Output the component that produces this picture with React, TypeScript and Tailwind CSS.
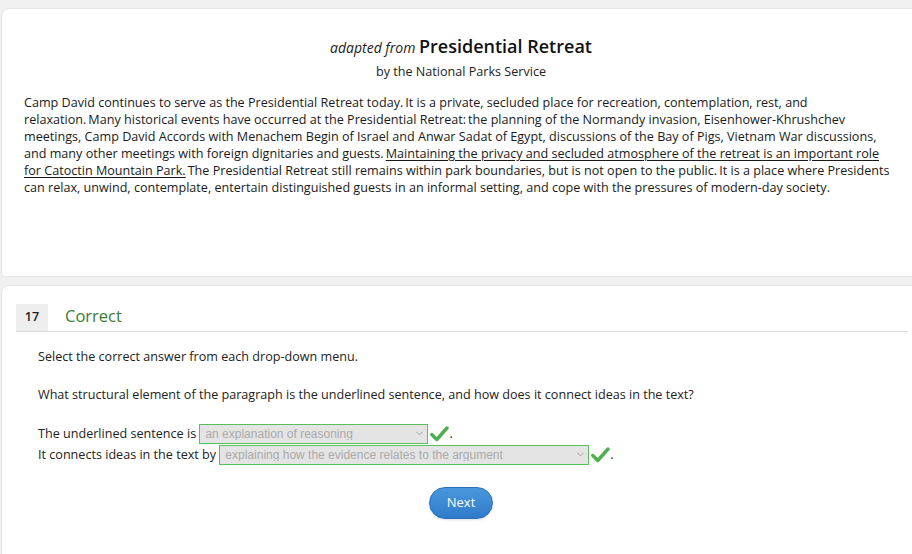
import { ChevronDown } from "lucide-react";

const font = { fontFamily: '"Open Sans", "Noto Sans", sans-serif' };

function Check() {
    return (
        <svg width="19" height="16" viewBox="0 0 19 16" className="inline-block ml-0.5">
            <path d="M1.8 8.5 L6.8 13.5 L17 2" fill="none" stroke="#4caf50" strokeWidth="3.4" strokeLinecap="round" strokeLinejoin="round" />
        </svg>
    );
}

function Dropdown({ value, width }: { value: string; width: string }) {
    return (
        <span
            className={`inline-flex items-center justify-between h-[20px] ${width} border border-[#58c058] bg-[#e4e4e4] pl-[5px] pr-[2px] align-middle`}
        >
            <span className="text-[12px] text-[#aaaaaa] font-['Liberation_Sans',Arial,sans-serif] leading-none truncate">
                {value}
            </span>
            <ChevronDown size={11} className="text-[#9a9a9a]" strokeWidth={2} />
        </span>
    );
}

export default function App() {
    return (
        <div className="w-[912px] h-[554px] overflow-hidden bg-[#f0f0f0] text-[#222]" style={font}>
            <div className="pt-[8px] pl-[1px] flex flex-col gap-[8px]">
                <div className="h-[269px] bg-white rounded-tl-[8px] rounded-bl-[4px] border border-[#e6e6e6] border-r-0 px-[22px] pt-[25px]">
                    <div className="pl-[8px]">
                        <div className="text-center leading-[24px]">
                            <span className="italic text-[14px]">adapted from </span>
                            <span className="text-[18px] font-semibold text-[#111]">Presidential Retreat</span>
                        </div>
                        <div className="text-center text-[12.6px] mt-[3px]">by the National Parks Service</div>
                    </div>
                    <p className="mt-[12px] text-[12.6px] leading-[17px] text-[#1a1a1a] whitespace-nowrap">
                        Camp David continues to serve as the Presidential Retreat today.&thinsp;It is a private, secluded place for recreation, contemplation, rest, and
                        <br />
                        relaxation.&thinsp;Many historical events have occurred at the Presidential Retreat:&thinsp;the planning of the Normandy invasion, Eisenhower-Khrushchev
                        <br />
                        meetings, Camp David Accords with Menachem Begin of Israel and Anwar Sadat of Egypt, discussions of the Bay of Pigs, Vietnam War discussions,
                        <br />
                        and many other meetings with foreign dignitaries and guests.&thinsp;
                        <span className="underline underline-offset-2">
                            Maintaining the privacy and secluded atmosphere of the retreat is an important role
                            <br />
                            for Catoctin Mountain Park.
                        </span>
                        &thinsp;The Presidential Retreat still remains within park boundaries, but is not open to the public.&thinsp;It is a place where Presidents
                        <br />
                        can relax, unwind, contemplate, entertain distinguished guests in an informal setting, and cope with the pressures of modern-day society.
                    </p>
                </div>

                <div className="h-[300px] bg-white rounded-tl-[8px] border border-[#e6e6e6] border-r-0 pl-[14px] pr-[4px] pt-[18px]">
                    <div className="flex items-center border-b border-[#dcdcdc]">
                        <div className="w-[32px] h-[27px] bg-[#eeeeee] flex items-center justify-center text-[12.6px] font-semibold text-[#222]">
                            17
                        </div>
                        <div className="ml-[17px] text-[16.5px] text-[#3d7a35] font-medium leading-[20px] -mt-[3px]">Correct</div>
                    </div>

                    <div className="pl-[22px] text-[12.6px] text-[#222]">
                        <p className="mt-[16px] leading-[18px]">Select the correct answer from each drop-down menu.</p>
                        <p className="mt-[20px] leading-[18px]">
                            What structural element of the paragraph is the underlined sentence, and how does it connect ideas in the text?
                        </p>
                        <div className="mt-[19px] leading-[21px]">
                            <div className="flex items-center h-[21px]">
                                <span>The underlined sentence is&nbsp;</span>
                                <Dropdown value="an explanation of reasoning" width="w-[229px]" />
                                <Check />
                                <span>.</span>
                            </div>
                            <div className="flex items-center h-[21px]">
                                <span>It connects ideas in the text by&nbsp;</span>
                                <Dropdown value="explaining how the evidence relates to the argument" width="w-[370px]" />
                                <Check />
                                <span>.</span>
                            </div>
                        </div>
                        <div className="flex justify-center mt-[22px] pr-[24px]">
                            <button className="w-[64px] h-[32px] rounded-full bg-gradient-to-b from-[#4a97dd] to-[#2f7bc9] border border-[#2a70b8] text-white text-[13px] shadow-sm">
                                Next
                            </button>
                        </div>
                    </div>
                </div>
            </div>
        </div>
    );
}
